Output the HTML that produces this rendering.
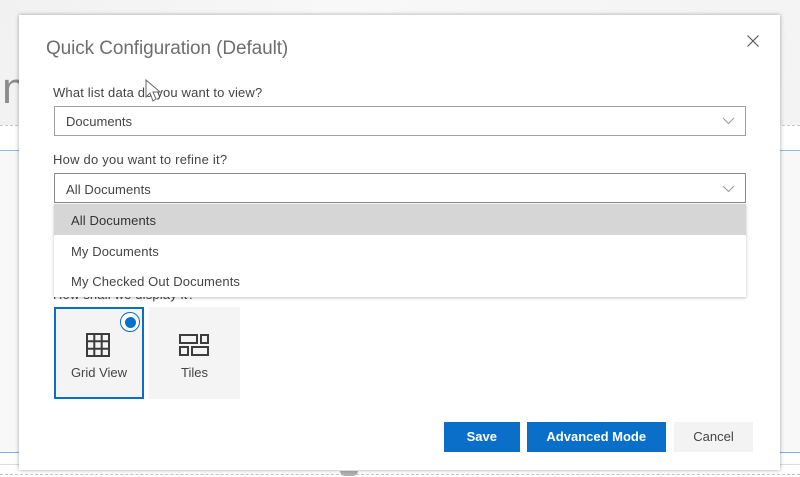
<!DOCTYPE html>
<html><head><meta charset="utf-8"><style>
html,body{margin:0;padding:0}
body{width:800px;height:477px;position:relative;overflow:hidden;background:#fff;font-family:"Liberation Sans",sans-serif;color:#444}
div{position:absolute;box-sizing:border-box}
.t{white-space:nowrap;line-height:16px;font-size:13px}
.sel{left:54px;width:691.5px;height:30px;border:1px solid #a0a0a0;background:#fff}
.btn{height:30px;top:422px;text-align:center;line-height:30px;font-size:13px;font-weight:bold;color:#fff;background:#0a6fc9}
</style></head><body>
<div style="left:0;top:0;width:800px;height:125px;background:linear-gradient(115deg,#f1f1f1,#f8f8f8 40%,#f3f3f3)"></div>
<div style="left:0;top:125px;width:800px;border-top:1px dashed #c8c8c8"></div>
<div style="left:0;top:150px;width:800px;height:1px;background:#8fbcdc"></div>
<div style="left:0;top:151px;width:800px;height:301px;background:#f8f8f8"></div>
<div style="left:0;top:452px;width:800px;height:1px;background:#7fb3d8"></div>
<div style="left:0;top:464px;width:800px;height:1px;background:#ddd"></div>
<div style="left:0;top:474px;width:800px;border-top:1px dashed #c4c4c4"></div>
<div style="left:340px;top:471px;width:18px;height:5px;background:#b0b0b0;border-radius:0 0 9px 9px"></div>
<div class="t" style="left:2px;top:61px;font-size:44px;line-height:56px;color:#8c8c8c;font-weight:normal">n</div>

<div style="left:19px;top:15px;width:761px;height:455px;background:#fff;box-shadow:0 0 4px rgba(0,0,0,.35)"></div>

<div class="t" style="left:46px;top:37px;font-size:19px;line-height:24px;color:#6e6e6e;letter-spacing:-.1px">Quick Configuration (Default)</div>
<svg style="position:absolute;left:747px;top:35px" width="12" height="12" viewBox="0 0 12 12"><path d="M.5.5L11.5 11.5M11.5.5L.5 11.5" stroke="#555" stroke-width="1.1" fill="none"/></svg>

<div class="t" style="left:53px;top:85px;letter-spacing:.16px">What list data do you want to view?</div>
<div class="sel" style="top:106px"></div>
<div class="t" style="left:66px;top:114px;letter-spacing:.03px">Documents</div>
<svg style="position:absolute;left:722px;top:117px" width="13" height="8" viewBox="0 0 13 8"><path d="M1 1L6.5 6.5L12 1" stroke="#999" stroke-width="1" fill="none"/></svg>

<div class="t" style="left:53px;top:152px;letter-spacing:.23px">How do you want to refine it?</div>
<div class="sel" style="top:173px;border-color:#8a8a8a"></div>
<div class="t" style="left:66px;top:182px;letter-spacing:.08px">All Documents</div>
<svg style="position:absolute;left:722px;top:185px" width="13" height="8" viewBox="0 0 13 8"><path d="M1 1L6.5 6.5L12 1" stroke="#999" stroke-width="1" fill="none"/></svg>

<div class="t" style="left:53px;top:287px;letter-spacing:.16px">How shall we display it?</div>
<div style="left:54px;top:204px;width:691.5px;height:93px;background:#fff;box-shadow:0 1px 3px rgba(0,0,0,.25)"></div>
<div style="left:54px;top:204px;width:691.5px;height:31px;background:#d6d6d6"></div>
<div class="t" style="left:71px;top:213px;color:#333;letter-spacing:.1px">All Documents</div>
<div class="t" style="left:71px;top:244px;letter-spacing:.1px">My Documents</div>
<div class="t" style="left:71px;top:274px;letter-spacing:.12px">My Checked Out Documents</div>

<div style="left:54px;top:307px;width:90px;height:92px;background:#f4f4f4;border:2px solid #0a6fc9"></div>
<div style="left:120px;top:312px;width:20px;height:20px;border-radius:50%;background:#fff;border:1.5px solid #0a6fc9"></div>
<div style="left:124.5px;top:316.5px;width:11px;height:11px;border-radius:50%;background:#0a6fc9"></div>
<svg style="position:absolute;left:85px;top:332px" width="26" height="26" viewBox="0 0 26 26"><path d="M2 2H24V24H2ZM9.3 2V24M16.7 2V24M2 9.3H24M2 16.7H24" stroke="#3c3c3c" stroke-width="2" fill="none"/></svg>
<div class="t" style="left:54px;top:365px;width:90px;text-align:center">Grid View</div>

<div style="left:149px;top:307px;width:91px;height:92px;background:#f4f4f4"></div>
<svg style="position:absolute;left:178px;top:333px" width="32" height="23" viewBox="0 0 32 23"><path d="M2 2H19V10H2ZM23 2H30V10H23ZM2 14H10V22H2ZM14 14H30V22H14Z" stroke="#3c3c3c" stroke-width="2" fill="none"/></svg>
<div class="t" style="left:149px;top:365px;width:91px;text-align:center">Tiles</div>

<div class="btn" style="left:444px;width:75.5px">Save</div>
<div class="btn" style="left:527px;width:138.5px">Advanced Mode</div>
<div class="btn" style="left:674px;width:79px;background:#f3f3f3;color:#444;font-weight:normal">Cancel</div>

<svg style="position:absolute;left:145px;top:79px" width="18" height="24" viewBox="0 0 18 24"><path d="M1 1V18L5 14L8 22L11 20L8 13H15Z" fill="#fff" stroke="#666" stroke-width="1"/></svg>
</body></html>
